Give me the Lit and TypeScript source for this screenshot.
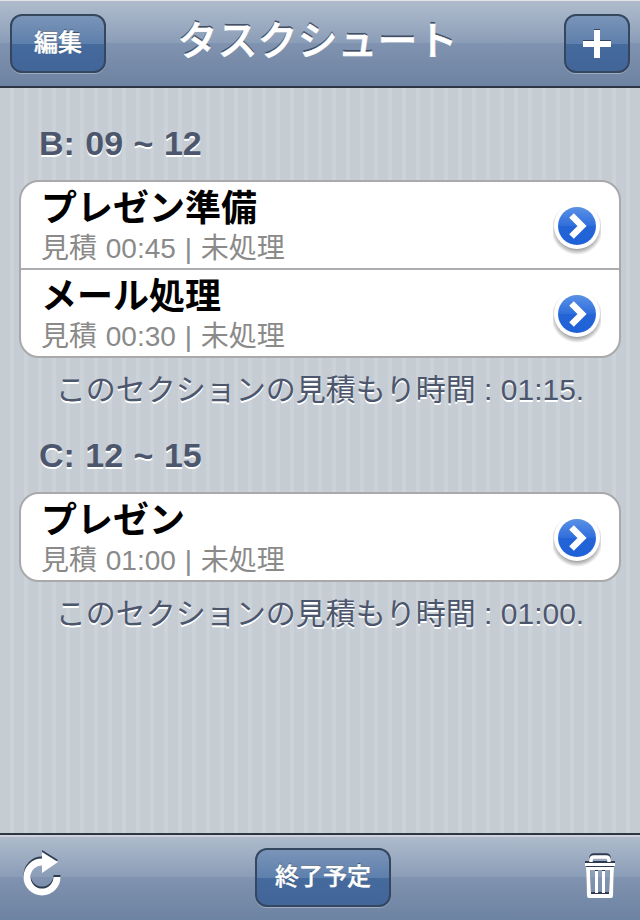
import { LitElement, html, css, svg } from 'lit'
import { customElement } from 'lit/decorators.js'

const sections = [
  {
    label: 'B: 09 ~ 12',
    total: 'このセクションの見積もり時間 : 01:15.',
    tasks: [
      { name: 'プレゼン準備', detail: '見積 00:45 | 未処理' },
      { name: 'メール処理', detail: '見積 00:30 | 未処理' },
    ],
  },
  {
    label: 'C: 12 ~ 15',
    total: 'このセクションの見積もり時間 : 01:00.',
    tasks: [{ name: 'プレゼン', detail: '見積 01:00 | 未処理' }],
  },
]

const chevron = svg`
  <svg class="disclosure" width="48" height="54" viewBox="0 0 48 54">
    <defs>
      <linearGradient id="disc" x1="0" y1="0" x2="0" y2="1">
        <stop offset="0" stop-color="#5a90e6" />
        <stop offset="0.5" stop-color="#2f6fdc" />
        <stop offset="0.5" stop-color="#2464d6" />
        <stop offset="1" stop-color="#1f62d8" />
      </linearGradient>
      <radialGradient id="discShadow" cx="0.5" cy="0.5" r="0.5">
        <stop offset="0.75" stop-color="#000" stop-opacity="0.4" />
        <stop offset="1" stop-color="#000" stop-opacity="0" />
      </radialGradient>
    </defs>
    <circle cx="24" cy="27" r="26" fill="url(#discShadow)" />
    <circle cx="24" cy="24" r="23" fill="#fff" />
    <circle cx="24" cy="24" r="19" fill="url(#disc)" />
    <path d="M18.5 13.5 L29 24 L18.5 34.5" fill="none" stroke="#fff" stroke-width="6.5" stroke-linejoin="miter" />
  </svg>
`

@customElement('app-root')
export class AppRoot extends LitElement {
  static styles = css`
    :host {
      display: flex;
      flex-direction: column;
      width: 640px;
      height: 920px;
      overflow: hidden;
      font-family: 'Liberation Sans', 'Noto Sans CJK JP', sans-serif;
      background: repeating-linear-gradient(to right, #c5ccd4 0, #c5ccd4 10px, #cbd2d8 10px, #cbd2d8 14px);
    }

    .bar {
      flex: none;
      background: linear-gradient(to bottom, #b0bccd 0, #8a9db7 50%, #8093b0 50%, #6d83a2 100%);
    }

    .nav {
      display: grid;
      grid-template-columns: 1fr auto 1fr;
      align-items: center;
      height: 85px;
      padding: 0 10px;
      border-top: 1px solid #e2e4e8;
      border-bottom: 2px solid #2d3642;
    }

    .title {
      font-size: 40px;
      font-weight: 500;
      color: #fff;
      -webkit-text-stroke: 0.6px #fff;
      text-shadow: 0 -2px 0 #424f66;
      line-height: 46px;
      margin: -6px 5px 0 0;
    }

    .btn {
      box-sizing: border-box;
      display: flex;
      align-items: center;
      justify-content: center;
      height: 59px;
      border: 2px solid #34475f;
      border-radius: 12px;
      background: linear-gradient(to bottom, #7a94b8 0, #5e80ac 50%, #456a9c 50%, #42659a 100%);
      box-shadow: 0 1px 0 rgba(255, 255, 255, 0.3);
      color: #fff;
      font-size: 24px;
      font-weight: 500;
      -webkit-text-stroke: 0.4px #fff;
      text-shadow: 0 -1px 0 #34475f;
    }

    .label {
      margin-top: -6px;
    }

    .edit {
      width: 96px;
      justify-self: start;
    }

    .add {
      width: 66px;
      justify-self: end;
    }

    .content {
      flex: 1;
      padding: 0 19px;
    }

    .section-label {
      margin: 33px 0 0 20px;
      height: 44px;
      line-height: 44px;
      font-size: 34px;
      font-weight: 700;
      word-spacing: 1px;
      color: #4c566c;
      text-shadow: 0 2px 0 #fff;
    }

    .section + .section .section-label {
      margin-top: 25px;
    }

    .card {
      margin-top: 15px;
      background: #fff;
      border: 2px solid #a9a9a9;
      border-radius: 20px;
      overflow: hidden;
    }

    .row {
      box-sizing: border-box;
      display: flex;
      align-items: center;
      justify-content: space-between;
      height: 86px;
      padding: 0 18px 0 20px;
    }

    .row + .row {
      height: 88px;
      border-top: 2px solid #abadb0;
    }

    .text {
      padding-top: 5px;
    }

    .name {
      font-size: 36px;
      font-weight: 700;
      color: #000;
      line-height: 44px;
      margin-top: -4px;
    }

    .detail {
      font-size: 28px;
      color: #8a8a8a;
      word-spacing: 1px;
      line-height: 32px;
      margin-top: 2px;
    }

    .total {
      margin-top: 14px;
      text-align: center;
      font-size: 30px;
      line-height: 36px;
      color: #4c566c;
      text-shadow: 0 2px 0 #fff;
    }

    .disclosure {
      display: block;
      margin-top: 8px;
    }

    .toolbar {
      display: flex;
      align-items: center;
      justify-content: space-between;
      height: 85px;
      padding: 0 24px 0 22px;
      border-top: 2px solid #2d3642;
      box-shadow: inset 0 2px 0 #ccd3dc;
    }

    .finish {
      width: 136px;
    }

    .tool {
      display: block;
      filter: drop-shadow(0 -2px 0 #2d3a50);
    }

    .reload {
      margin-bottom: 7px;
    }

    .trash {
      margin-bottom: 3px;
    }
  `

  render() {
    return html`
      <header class="bar nav">
        <div class="btn edit"><span class="label">編集</span></div>
        <div class="title">タスクシュート</div>
        <div class="btn add">
          <svg width="30" height="30" viewBox="0 0 30 30" style="filter: drop-shadow(0 -1px 0 #34475f)">
            <path d="M12 1h6v11h11v6H18v11h-6V18H1v-6h11z" fill="#fff" />
          </svg>
        </div>
      </header>
      <main class="content">
        ${sections.map(
          (s) => html`
            <section class="section">
              <div class="section-label">${s.label}</div>
              <div class="card">
                ${s.tasks.map(
                  (t) => html`
                    <div class="row">
                      <div class="text">
                        <div class="name">${t.name}</div>
                        <div class="detail">${t.detail}</div>
                      </div>
                      ${chevron}
                    </div>
                  `,
                )}
              </div>
              <div class="total">${s.total}</div>
            </section>
          `,
        )}
      </main>
      <footer class="bar toolbar">
        <svg class="tool reload" width="40" height="48" viewBox="0 0 40 48">
          <path d="M35 27 A15 15 0 1 1 20 12" fill="none" stroke="#fff" stroke-width="7" />
          <path d="M20 2 L36 12 L20 23 z" fill="#fff" />
        </svg>
        <div class="btn finish"><span class="label">終了予定</span></div>
        <svg class="tool trash" width="32" height="44" viewBox="0 0 32 44">
          <path d="M7 8 V6 Q7 3 10 3 H22 Q25 3 25 6 V8" fill="none" stroke="#fff" stroke-width="3.5" />
          <path d="M1 9 H31 V12 H1 z" fill="#fff" />
          <path d="M2 13 H30 L29 42 Q29 44 27 44 H5 Q3 44 3 42 z M6 16 L7 40 H25 L26 16 z" fill="#fff" fill-rule="evenodd" />
          <path d="M11 17 h3 v22 h-3z M18 17 h3 v22 h-3z" fill="#fff" />
        </svg>
      </footer>
    `
  }
}
